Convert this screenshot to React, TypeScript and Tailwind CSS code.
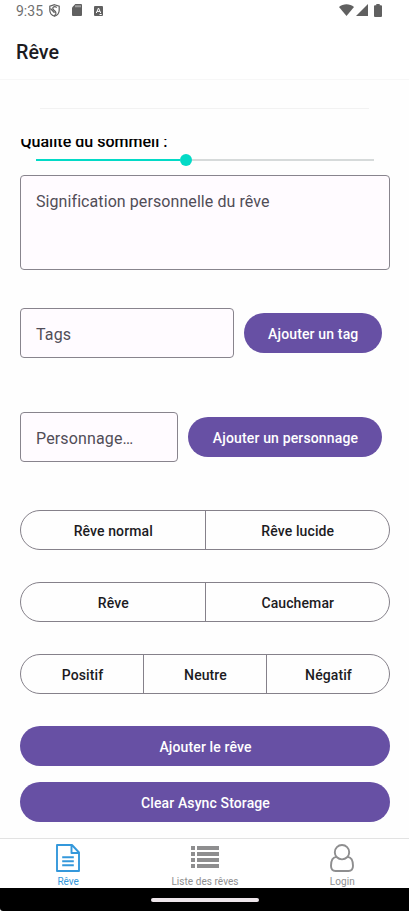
import type { ReactNode } from "react";

function StatusBar() {
  return (
    <div className="flex h-[22px] items-start justify-between pl-4 pr-[27px] text-[#606060]">
      <div className="flex items-start">
        <span className="w-[33px] whitespace-nowrap text-[14px] leading-[22px] text-[#707070]">9:35</span>
        <svg className="mt-1 h-[13px] w-[11px]" viewBox="0 0 11 13" fill="none" stroke="currentColor" strokeWidth="1.2">
          <path d="M5.5 .7 10.2 2.3V6.2C10.2 9.2 8 11.4 5.5 12.3 3 11.4.8 9.2.8 6.2V2.3Z" />
          <path d="M7.8 3.4C5 1.8 2.2 3.600 4.800 6 7.800 8.400 7.500 10 5.200 11.800M1.500 4.500 5.500 8.800" />
        </svg>
        <svg className="ml-[12px] mt-[4px] h-[12px] w-[10px]" viewBox="0 0 10 12" fill="currentColor">
          <path d="M3.3 0H9a1 1 0 0 1 1 1v10a1 1 0 0 1-1 1H1a1 1 0 0 1-1-1V3.4Z" />
          <path d="M4 1.3v2M6 1.3v2M8 1.3v2" stroke="#fff" strokeWidth=".8" />
        </svg>
        <svg className="ml-[12px] mt-[6px] h-[10px] w-[9px]" viewBox="0 0 9 10">
          <rect width="9" height="10" rx="1" fill="currentColor" />
          <path d="M2.3 7 4.5 2 6.7 7M3.1 5.4h2.8M5.5 8.5h2.2" fill="none" stroke="#fff" strokeWidth="1" />
        </svg>
      </div>
      <div className="flex items-start">
        <svg className="mt-1 h-[12px] w-[15px]" viewBox="0 0 15 12" fill="currentColor">
          <path d="M0 3C4.2-.8 10.800-.8 15 3L7.500 12Z" />
        </svg>
        <svg className="ml-[2px] mt-1 h-[12px] w-[12px]" viewBox="0 0 12 12" fill="currentColor">
          <path d="M12 0v12H0Z" />
        </svg>
        <svg className="ml-[6px] mt-1 h-[13px] w-[8px]" viewBox="0 0 8 13" fill="currentColor">
          <path d="M2.300 0h3.400v1.200H7a1 1 0 0 1 1 1V12a1 1 0 0 1-1 1H1a1 1 0 0 1-1-1V2.200a1 1 0 0 1 1-1h1.300Z" />
        </svg>
      </div>
    </div>
  );
}

function Field({ label, className }: { label: string; className: string }) {
  return (
    <div className={`rounded-[4px] border border-[#88848d] bg-[#fffbff] pl-[15px] text-[16px] leading-[24px] text-[#514d57] ${className}`}>
      {label}
    </div>
  );
}

function Button({ children, className = "" }: { children: ReactNode; className?: string }) {
  return (
    <button className={`flex h-[40px] items-center justify-center whitespace-nowrap rounded-full bg-[#6750a4] pl-px pt-[3px] text-[14px] font-medium text-white ${className}`}>
      {children}
    </button>
  );
}

function Segments({ items, className }: { items: string[]; className: string }) {
  return (
    <div className={`flex h-[40px] divide-x divide-[#85818a] rounded-full border border-[#85818a] text-[14px] font-medium tracking-[0.1px] text-[#1c1b1f] ${className}`}>
      {items.map((item) => (
        <button key={item} className="flex flex-1 items-center justify-center pl-px pt-[3px]">
          {item}
        </button>
      ))}
    </div>
  );
}

export default function App() {
  return (
    <div className="flex h-[911px] w-[409px] flex-col overflow-hidden bg-[#fefefe] font-['Roboto',sans-serif]">
      <header className="h-[80px] shrink-0 border-b border-[#f7f7f7] bg-white">
        <StatusBar />
        <h1 className="pl-4 pt-[16px] text-[19.7px] font-medium leading-[29px] text-[#1c1b1f]">Rêve</h1>
      </header>
      <div className="mx-[40px] mt-[28px] h-px shrink-0 bg-[#f2f2f2]" />
      <main className="mt-[30px] h-[699px] shrink-0 overflow-hidden pl-5 pr-[19px]">
        <div className="-mt-[9px] h-[23px] pl-[0.5px] text-[16px] font-medium leading-[23px] text-black">
          <span className="tracking-[0.020px]">Qualité du sommeil :</span>
        </div>
        <div className="ml-[16px] mr-[16px] flex h-[13px] items-center">
          <div className="h-[2px] w-[144px] bg-[#03dac6]" />
          <div className="size-[12px] rounded-full bg-[#03dac6]" />
          <div className="h-[2px] flex-1 bg-[#d6dada]" />
        </div>
        <Field label="Signification personnelle du rêve" className="mt-[9px] h-[95px] pt-[14px] tracking-[0.08px]" />
        <div className="mt-[38px] flex h-[50px] items-center">
          <Field label="Tags" className="h-[50px] w-[214px] pt-[14px] tracking-[0.15px]" />
          <Button className="ml-[9.500px] w-[138.500px] tracking-[0.15px]">Ajouter un tag</Button>
        </div>
        <div className="mt-[54px] flex h-[50px] items-center">
          <Field label="Personnage…" className="h-[50px] w-[158px] pt-[14px] tracking-[0.15px]" />
          <Button className="ml-[10px] w-[194px] tracking-[0.15px]">Ajouter un personnage</Button>
        </div>
        <Segments className="mt-[48px]" items={["Rêve normal", "Rêve lucide"]} />
        <Segments className="mt-[32px]" items={["Rêve", "Cauchemar"]} />
        <Segments className="mt-[32px]" items={["Positif", "Neutre", "Négatif"]} />
        <Button className="mt-[32px] w-full tracking-[0.12px]">Ajouter le rêve</Button>
        <Button className="mt-[16px] w-full tracking-[0.12px]">Clear Async Storage</Button>
      </main>
      <nav className="grid h-[50px] shrink-0 grid-cols-3 border-t border-[#e2e2e2] bg-white text-[10px] leading-[12px] text-[#8e8e8f]">
        <div className="flex flex-col items-center pt-[5px] text-[#3498db]">
          <svg className="h-[28px] w-[24px]" viewBox="0 0 24 28" fill="none" stroke="currentColor" strokeWidth="1.900" strokeLinejoin="round">
            <path d="M1 1h15l7 7.500V27H1ZM15.500 1v8H23M6.200 13.200h11.600M6.200 17.200h11.600M6.200 21.200h11.600" />
          </svg>
          <span className="mt-[4px]">Rêve</span>
        </div>
        <div className="flex flex-col items-center pl-px pt-[5px]">
          <svg className="h-[28px] w-[28px]" viewBox="0 0 28 28" fill="currentColor">
            <path d="M0 2h4v4H0ZM6 2h22v4H6ZM0 8h4v4H0ZM6 8h22v4H6ZM0 14h4v4H0ZM6 14h22v4H6ZM0 20h4v4H0ZM6 20h22v4H6Z" />
          </svg>
          <span className="mt-[4px] tracking-[0.05px]">Liste des rêves</span>
        </div>
        <div className="flex flex-col items-center pl-[3px] pt-[5px]">
          <svg className="h-[28px] w-[24px]" viewBox="0 0 24 28" fill="none" stroke="currentColor" strokeWidth="1.900">
            <circle cx="12" cy="8.200" r="7.200" />
            <path d="M6.200 12.900C2.300 13.400 1 17.500 1 21.800 1 25.200 2.900 27 5.500 27h13c2.600 0 4.500-1.800 4.500-5.200 0-4.300-1.300-8.400-5.200-8.900" />
          </svg>
          <span className="mt-[4px] tracking-[0.1px]">Login</span>
        </div>
      </nav>
      <footer className="flex h-[23px] shrink-0 justify-center rounded-bl-[3px] bg-black pt-[10px]">
        <div className="h-[4px] w-[108px] rounded-full bg-[#eee6eb]" />
      </footer>
    </div>
  );
}
